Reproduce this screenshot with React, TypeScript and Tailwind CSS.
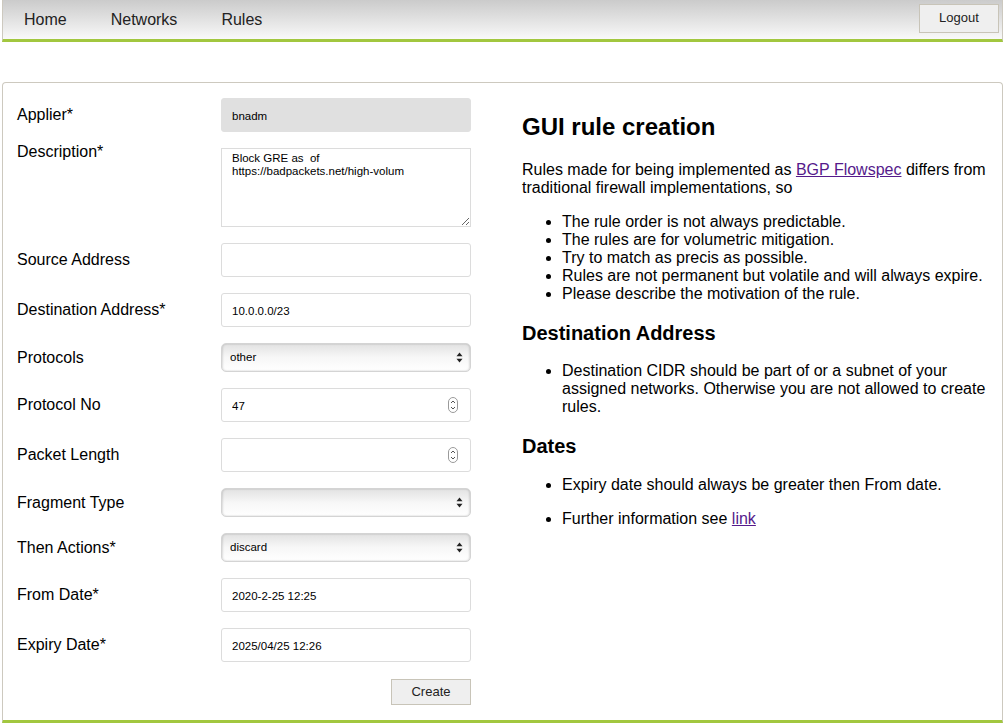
import React from "react";

const FONT = { fontFamily: '"Liberation Sans", Arial, sans-serif' };

const GREEN = "border-b-[#a2c73f]";

function SelectArrows() {
  return (
    <svg width="7" height="11" viewBox="0 0 7 11" className="shrink-0">
      <path d="M3.5 0.5 L6.5 4.2 L0.5 4.2 Z" fill="#222" />
      <path d="M3.5 10.5 L6.5 6.8 L0.5 6.8 Z" fill="#222" />
    </svg>
  );
}

function Spinner() {
  return (
    <svg width="10" height="16" viewBox="0 0 10 16" className="shrink-0">
      <rect x="0.5" y="0.5" width="9" height="15" rx="4.5" fill="#fff" stroke="#9a9a9a" />
      <path d="M3 6 L5 4 L7 6" fill="none" stroke="#555" strokeWidth="1" />
      <path d="M3 10 L5 12 L7 10" fill="none" stroke="#555" strokeWidth="1" />
    </svg>
  );
}

function TextInput(props: { value?: string; disabled?: boolean }) {
  return (
    <input
      type="text"
      defaultValue={props.value}
      readOnly={props.disabled}
      className={`h-[34px] w-full rounded-[3px] px-[10px] pt-[1px] text-[11.5px] text-black outline-none ${
        props.disabled
          ? "border border-[#e0e0e0] bg-[#e0e0e0]"
          : "border border-[#dcdcdc] bg-white"
      }`}
      style={FONT}
    />
  );
}

function NumberInput(props: { value?: string }) {
  return (
    <div className="flex h-[34px] w-full items-center rounded-[3px] border border-[#dcdcdc] bg-white pr-[12px]">
      <input
        type="text"
        defaultValue={props.value}
        className="h-full min-w-0 flex-1 bg-transparent px-[10px] pt-[1px] text-[11.5px] text-black outline-none"
        style={FONT}
      />
      <Spinner />
    </div>
  );
}

function Select(props: { value: string; options: string[] }) {
  return (
    <div className="flex h-[29px] w-full items-center rounded-[5px] border border-[#d4d4d4] bg-gradient-to-b from-[#e2e2e2] via-[#f7f7f7] to-[#ffffff] pr-[7px] shadow-[inset_1px_0_2px_rgba(0,0,0,0.12),inset_-1px_0_2px_rgba(0,0,0,0.12)]">
      <select
        defaultValue={props.value}
        className="h-full min-w-0 flex-1 appearance-none bg-transparent pl-[8px] text-[11.5px] text-black outline-none"
        style={FONT}
      >
        {props.options.map((o) => (
          <option key={o} value={o}>
            {o}
          </option>
        ))}
      </select>
      <SelectArrows />
    </div>
  );
}

function Label(props: { children: React.ReactNode; top?: boolean }) {
  return (
    <div
      className={`text-[16px] leading-[18px] text-black ${props.top ? "-mt-[5px] self-start" : ""}`}
    >
      {props.children}
    </div>
  );
}

export default function App() {
  return (
    <div className="min-h-[726px] bg-white text-black" style={FONT}>
      {/* NAVBAR */}
      <div
        className={`mx-[2px] flex h-[42px] items-center justify-between border-x border-b-[3px] border-x-[#cdc9bf] ${GREEN} bg-gradient-to-b from-[#cbcbcb] to-[#f9f9f9] pl-[21px] pr-[3px]`}
      >
        <nav className="flex gap-[44px] text-[16px] text-[#222]">
          <a href="#">Home</a>
          <a href="#">Networks</a>
          <a href="#">Rules</a>
        </nav>
        <button className="mb-[3px] h-[29px] w-[80px] border border-[#c8c4b8] bg-[#efefef] text-[13px] text-[#222]">
          Logout
        </button>
      </div>

      {/* PANEL */}
      <div
        className={`mx-[2px] mt-[40px] flex gap-[51px] rounded-t-[4px] border border-[#cdc9bf] border-b-[3px] ${GREEN} px-[14px] pb-[15px] pt-[15px]`}
      >
        {/* FORM */}
        <div className="w-[454px] shrink-0">
          <div className="grid grid-cols-[204px_250px] items-center gap-y-[16px]">
            <Label>Applier*</Label>
            <TextInput value="bnadm" disabled />

            <Label top>Description*</Label>
            <textarea
              defaultValue={"Block GRE as  of\nhttps://badpackets.net/high-volum"}
              className="h-[79px] w-full rounded-none border border-[#dcdcdc] bg-white px-[10px] pt-[3px] text-[11.5px] leading-[13px] text-black outline-none"
              style={FONT}
            />

            <Label>Source Address</Label>
            <TextInput />

            <Label>Destination Address*</Label>
            <TextInput value="10.0.0.0/23" />

            <Label>Protocols</Label>
            <Select value="other" options={["tcp", "udp", "icmp", "other"]} />

            <Label>Protocol No</Label>
            <NumberInput value="47" />

            <Label>Packet Length</Label>
            <NumberInput />

            <Label>Fragment Type</Label>
            <Select value="" options={["", "dont-fragment", "is-fragment", "first-fragment", "last-fragment"]} />

            <Label>Then Actions*</Label>
            <Select value="discard" options={["discard", "accept", "rate-limit"]} />

            <Label>From Date*</Label>
            <TextInput value="2020-2-25 12:25" />

            <Label>Expiry Date*</Label>
            <TextInput value="2025/04/25 12:26" />
          </div>
          <div className="mt-[17px] flex justify-end">
            <button className="h-[26px] w-[80px] border border-[#c8c4b8] bg-[#efefef] text-[13px] text-[#222]">
              Create
            </button>
          </div>
        </div>

        {/* HELP */}
        <div className="min-w-0 flex-1 pr-[2px] text-[16px] leading-[18px]">
          <h2 className="mt-[15px] text-[24px] font-bold leading-[28px]">GUI rule creation</h2>
          <p className="mt-[20px]">
            Rules made for being implemented as{" "}
            <a href="#" className="text-[#551a8b] underline">
              BGP Flowspec
            </a>{" "}
            differs from traditional firewall implementations, so
          </p>
          <ul className="mt-[16px] list-disc pl-[40px]">
            <li>The rule order is not always predictable.</li>
            <li>The rules are for volumetric mitigation.</li>
            <li>Try to match as precis as possible.</li>
            <li>Rules are not permanent but volatile and will always expire.</li>
            <li>Please describe the motivation of the rule.</li>
          </ul>
          <h3 className="mt-[18px] text-[20px] font-bold leading-[24px]">Destination Address</h3>
          <ul className="mt-[17px] list-disc pl-[40px]">
            <li>
              Destination CIDR should be part of or a subnet of your assigned networks. Otherwise you
              are not allowed to create rules.
            </li>
          </ul>
          <h3 className="mt-[18px] text-[20px] font-bold leading-[24px]">Dates</h3>
          <ul className="mt-[18px] list-disc pl-[40px]">
            <li>Expiry date should always be greater then From date.</li>
            <li className="mt-[16px]">
              Further information see{" "}
              <a href="#" className="text-[#551a8b] underline">
                link
              </a>
            </li>
          </ul>
        </div>
      </div>
    </div>
  );
}
